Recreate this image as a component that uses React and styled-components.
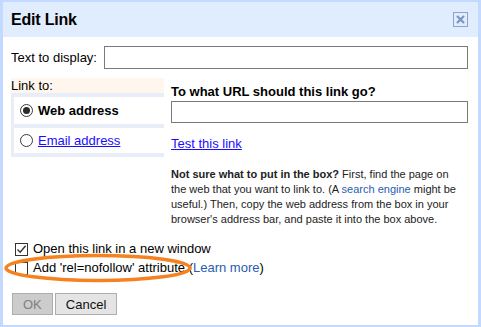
import React from "react";
import styled, { createGlobalStyle } from "styled-components";

const Global = createGlobalStyle`
  html, body { margin: 0; padding: 0; background: #fff; }
  body { font-family: "Liberation Sans", Arial, sans-serif; font-size: 13px; color: #000; }
`;

const Dialog = styled.div`
  position: relative;
  width: 481px; height: 327px;
  box-sizing: border-box;
  border-style: solid; border-color: #c3d9ff;
  border-width: 2px 3px 2px 3px;
  background: #fff;
  overflow: hidden;
`;

const TitleBar = styled.div`
  display: flex; align-items: center; justify-content: space-between;
  height: 35px;
  padding: 0 10px 0 8px;
  background: #e0edfe;
`;

const Title = styled.div`
  font-size: 16px; font-weight: bold; letter-spacing: -0.2px;
`;

const CloseBox = styled.div`
  width: 13px; height: 13px;
  border: 1px solid #8ea3c9;
  display: flex; align-items: center; justify-content: center;
  margin-top: -1px;
`;

const Body = styled.div`
  padding: 0 10px 0 8px;
`;

const TextRow = styled.div`
  display: flex; align-items: center;
  margin-top: 9px;
  gap: 7px;
`;

const Input = styled.div`
  flex: 1;
  height: ${p => p.h}px;
  box-sizing: border-box;
  border: 1px solid #7a7a7a;
  background: #fff;
`;

const LinkSection = styled.div`
  display: flex;
  margin-top: 9px;
`;

const LeftCol = styled.div`
  width: 153px;
  flex: none;
`;

const LinkToHead = styled.div`
  height: 15px; line-height: 15px;
  background: #fff7ee;
`;

const Options = styled.div`
  display: flex; flex-direction: column; gap: 4px;
  padding: 4px 0 4px 3px;
  background: #e8eef8;
`;

const Option = styled.div`
  display: flex; align-items: center; gap: 5px;
  height: ${p => p.h}px;
  padding-left: 6px;
  background: #fff;
  font-weight: ${p => (p.active ? "bold" : "normal")};
`;

const Radio = styled.span`
  width: 11px; height: 11px;
  border: 1px solid #3a3a3a;
  border-radius: 50%;
  display: flex; align-items: center; justify-content: center;
  background: #fff;
  &::after {
    content: "";
    width: 7px; height: 7px; border-radius: 50%;
    background: ${p => (p.checked ? "#2a2a2a" : "transparent")};
  }
`;

const BlueLink = styled.a`
  color: #1a0dff;
  text-decoration: underline;
`;

const SoftLink = styled.a`
  color: #2a5db0;
  text-decoration: none;
`;

const RightCol = styled.div`
  flex: 1;
  margin-left: 7px;
  padding-top: 6px;
`;

const Heading = styled.div`
  font-weight: bold; line-height: 15px;
  margin-bottom: 2px;
`;

const TestLine = styled.div`
  margin-top: 13px; line-height: 15px;
`;

const Help = styled.p`
  margin: 16px 0 0;
  width: 290px;
  font-size: 11px; line-height: 15px;
  color: #222;
`;

const Checks = styled.div`
  display: flex; flex-direction: column;
  margin-top: 12px;
`;

const CheckRow = styled.label`
  display: flex; align-items: center; gap: 5px;
  height: 19px;
  padding-left: 4px;
`;

const Box = styled.span`
  width: 11px; height: 11px;
  border: 1px solid #333;
  background: #fff;
  display: flex; align-items: center; justify-content: center;
  margin-top: 1px;
`;

const Buttons = styled.div`
  display: flex; gap: 2px;
  margin-top: 16px;
  padding-left: 1px;
`;

const Button = styled.button`
  height: 22px;
  padding: 0 10px;
  font-family: inherit; font-size: 13px;
  border: 1px solid #adadad;
  border-radius: 0;
  background: ${p => (p.disabled ? "#cccccc" : "#e4e4e4")};
  color: ${p => (p.disabled ? "#808080" : "#111")};
`;

const Ring = styled.svg`
  position: absolute;
  left: 0; top: 250px;
  pointer-events: none;
`;

export default function App() {
  return (
    <>
      <Global />
      <Dialog>
        <TitleBar>
          <Title>Edit Link</Title>
          <CloseBox>
            <svg width="11" height="11" viewBox="0 0 11 11">
              <path d="M2 2 L9 9 M9 2 L2 9" stroke="#7d93c0" strokeWidth="2.2" />
            </svg>
          </CloseBox>
        </TitleBar>
        <Body>
          <TextRow>
            <span>Text to display:</span>
            <Input h={23} />
          </TextRow>
          <LinkSection>
            <LeftCol>
              <LinkToHead>Link to:</LinkToHead>
              <Options>
                <Option h={27} active>
                  <Radio checked />
                  Web address
                </Option>
                <Option h={25}>
                  <Radio />
                  <BlueLink>Email address</BlueLink>
                </Option>
              </Options>
            </LeftCol>
            <RightCol>
              <Heading>To what URL should this link go?</Heading>
              <Input h={22} />
              <TestLine>
                <BlueLink>Test this link</BlueLink>
              </TestLine>
              <Help>
                <b>Not sure what to put in the box?</b> First, find the page on the web that you want to link to. (A{" "}
                <SoftLink>search engine</SoftLink> might be useful.) Then, copy the web address from the box in your
                browser's address bar, and paste it into the box above.
              </Help>
            </RightCol>
          </LinkSection>
          <Checks>
            <CheckRow>
              <Box>
                <svg width="11" height="11" viewBox="0 0 11 11">
                  <path d="M1.5 5.5 L4.2 8.2 L9.6 1.8" fill="none" stroke="#333" strokeWidth="1.4" />
                </svg>
              </Box>
              Open this link in a new window
            </CheckRow>
            <CheckRow>
              <Box />
              <span>
                Add 'rel=nofollow' attribute (<SoftLink>Learn more</SoftLink>)
              </span>
            </CheckRow>
          </Checks>
          <Buttons>
            <Button disabled>OK</Button>
            <Button>Cancel</Button>
          </Buttons>
        </Body>
        <Ring width="200" height="36" viewBox="0 0 200 36">
          <ellipse cx="95" cy="16" rx="92" ry="12.5" fill="none" stroke="#f5821f" strokeWidth="3.5" />
        </Ring>
      </Dialog>
    </>
  );
}
